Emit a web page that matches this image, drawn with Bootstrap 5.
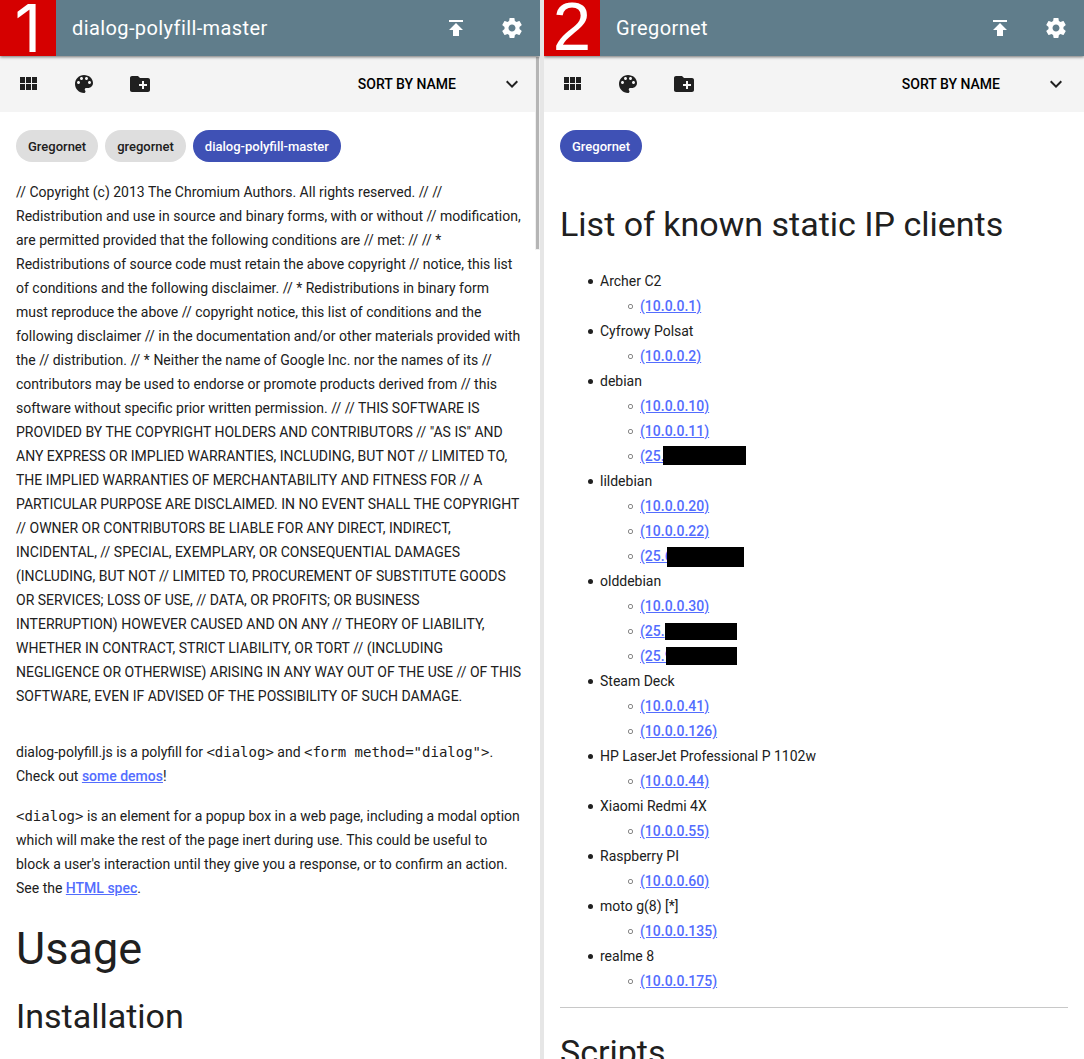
<!DOCTYPE html>
<html lang="en">
<head>
<meta charset="utf-8">
<title>Gregornet</title>
<link rel="stylesheet" href="https://cdn.jsdelivr.net/npm/bootstrap@5.3.0/dist/css/bootstrap.min.css">
<style>
body{font-family:Roboto,sans-serif;font-size:14px;line-height:24px;color:#202020;background:#e6e6e6;height:1059px;overflow:hidden}
.pane{width:540px;height:1059px;background:#fff;overflow:hidden}
.bar-top{height:56px;background:#607d8b;color:#fff;box-shadow:0 1px 3px rgba(0,0,0,.55);z-index:2}
.num{width:56px;height:56px;background:#d50000;font:400 69px/54px "Liberation Sans",sans-serif}
.num-one{font-family:Inter,sans-serif;font-size:66px;line-height:57px;font-weight:400}
.pane-title{font-size:20px;letter-spacing:.4px}
.bar-tools{height:56px;background:#f4f4f4}
.icon-set{gap:32px}
.sort{color:#000;font-weight:500;margin-right:44px}
svg{width:24px;height:24px;fill:currentColor;display:block}
.tags{padding:18px 16px 0;gap:7px}
.tag{height:32px;line-height:33px;border-radius:16px;padding:0 12px;background:#dedede;font-size:13px;font-weight:500}
.tag-on{background:#3f51b5;color:#fff}
.body-text{padding:18px 16px 0}
a{color:#536dfe;font-weight:500}
code{font-family:"DejaVu Sans Mono",monospace;font-size:14px;color:inherit}
h2{font-size:45px;line-height:48px;font-weight:400;margin:25px 0 23px}
h3{font-size:34px;line-height:40px;font-weight:400;margin:0}
.clients{line-height:25px;padding-left:40px;margin:25px 0 0;list-style:none}
.clients ul{padding-left:40px;list-style:none}
.clients li{position:relative}
.clients li::before{content:"";position:absolute;left:-12px;top:10px;width:5px;height:5px;border-radius:50%;background:#202020}
.clients ul li::before{background:none;border:1px solid #888;border-radius:2px}
.hide-box{background:#000;display:block}
.rule{height:1px;background:#c8c8c8;margin-top:13px}
.scroll-thumb{right:0;top:57px;width:5px;height:193px;background:#f0f0f0;z-index:1}
.scroll-thumb::before{content:"";display:block;width:3px;height:192px;margin-left:1px;background:#b5b5b5}
</style>
<script src="https://cdn.jsdelivr.net/npm/bootstrap@5.3.0/dist/js/bootstrap.bundle.min.js"></script>
</head>
<body>
<svg class="d-none">
<symbol id="i-grid" viewBox="0 0 24 24"><path d="M4 11h5V5H4v6zm0 7h5v-6H4v6zm6 0h5v-6h-5v6zm6 0h5v-6h-5v6zm-6-7h5V5h-5v6zm6-6v6h5V5h-5z"/></symbol>
<symbol id="i-palette" viewBox="0 0 24 24"><path d="M12 3c-4.97 0-9 4.03-9 9s4.03 9 9 9c.83 0 1.5-.67 1.5-1.5 0-.39-.15-.74-.39-1.01-.23-.26-.38-.61-.38-.99 0-.83.67-1.5 1.5-1.5H16c2.76 0 5-2.24 5-5 0-4.42-4.03-8-9-8zm-5.5 9c-.83 0-1.5-.67-1.5-1.5S5.67 9 6.5 9 8 9.67 8 10.5 7.33 12 6.5 12zm3-4C8.67 8 8 7.33 8 6.5S8.67 5 9.5 5s1.5.67 1.5 1.5S10.33 8 9.5 8zm5 0c-.83 0-1.5-.67-1.5-1.5S13.67 5 14.5 5s1.5.67 1.5 1.5S15.33 8 14.5 8zm3 4c-.83 0-1.5-.67-1.5-1.5S16.67 9 17.5 9s1.5.67 1.5 1.5-.67 1.5-1.5 1.5z"/></symbol>
<symbol id="i-folder" viewBox="0 0 24 24"><path d="M20 6h-8l-2-2H4c-1.11 0-1.99.89-1.99 2L2 18c0 1.11.89 2 2 2h16c1.11 0 2-.89 2-2V8c0-1.11-.89-2-2-2zm-1 8h-3v3h-2v-3h-3v-2h3V9h2v3h3v2z"/></symbol>
<symbol id="i-top" viewBox="0 0 24 24"><path d="M5 4v2h14V4H5zm0 10h4v6h6v-6h4l-7-7-7 7z"/></symbol>
<symbol id="i-gear" viewBox="0 0 24 24"><path d="M19.43 12.98c.04-.32.07-.64.07-.98s-.03-.66-.07-.98l2.11-1.65c.19-.15.24-.42.12-.64l-2-3.46c-.12-.22-.39-.3-.61-.22l-2.49 1c-.52-.4-1.08-.73-1.69-.98l-.38-2.65C14.46 2.18 14.25 2 14 2h-4c-.25 0-.46.18-.49.42l-.38 2.65c-.61.25-1.17.59-1.69.98l-2.49-1c-.23-.09-.49 0-.61.22l-2 3.46c-.13.22-.07.49.12.64l2.11 1.65c-.04.32-.07.65-.07.98s.03.66.07.98l-2.11 1.65c-.19.15-.24.42-.12.64l2 3.46c.12.22.39.3.61.22l2.49-1c.52.4 1.08.73 1.69.98l.38 2.65c.03.24.24.42.49.42h4c.25 0 .46-.18.49-.42l.38-2.65c.61-.25 1.17-.59 1.69-.98l2.49 1c.23.09.49 0 .61-.22l2-3.46c.12-.22.07-.49-.12-.64l-2.11-1.65zM12 15.5c-1.93 0-3.5-1.57-3.5-3.5s1.57-3.5 3.5-3.5 3.5 1.57 3.5 3.5-1.57 3.5-3.5 3.5z"/></symbol>
<symbol id="i-down" viewBox="0 0 24 24"><path d="M16.59 8.59L12 13.17 7.41 8.59 6 10l6 6 6-6z"/></symbol>
</svg>
<div class="d-flex gap-1">
<section class="pane position-relative">
<header class="bar-top d-flex align-items-center position-relative pe-3">
<div class="num num-one text-center">1</div><div class="pane-title ms-3 me-auto">dialog-polyfill-master</div>
<div class="d-flex icon-set"><svg><use href="#i-top"/></svg><svg><use href="#i-gear"/></svg></div>
</header>
<div class="bar-tools d-flex align-items-center px-3">
<div class="d-flex me-auto icon-set"><svg><use href="#i-grid"/></svg><svg><use href="#i-palette"/></svg><svg><use href="#i-folder"/></svg></div>
<span class="sort">SORT BY NAME</span><svg><use href="#i-down"/></svg>
</div>
<div class="tags d-flex"><span class="tag">Gregornet</span><span class="tag">gregornet</span><span class="tag tag-on">dialog-polyfill-master</span></div>
<div class="body-text text-nowrap">
<p class="mb-0">// Copyright (c) 2013 The Chromium Authors. All rights reserved. // //<br>
Redistribution and use in source and binary forms, with or without // modification,<br>
are permitted provided that the following conditions are // met: // // *<br>
Redistributions of source code must retain the above copyright // notice, this list<br>
of conditions and the following disclaimer. // * Redistributions in binary form<br>
must reproduce the above // copyright notice, this list of conditions and the<br>
following disclaimer // in the documentation and/or other materials provided with<br>
the // distribution. // * Neither the name of Google Inc. nor the names of its //<br>
contributors may be used to endorse or promote products derived from // this<br>
software without specific prior written permission. // // THIS SOFTWARE IS<br>
PROVIDED BY THE COPYRIGHT HOLDERS AND CONTRIBUTORS // "AS IS" AND<br>
ANY EXPRESS OR IMPLIED WARRANTIES, INCLUDING, BUT NOT // LIMITED TO,<br>
THE IMPLIED WARRANTIES OF MERCHANTABILITY AND FITNESS FOR // A<br>
PARTICULAR PURPOSE ARE DISCLAIMED. IN NO EVENT SHALL THE COPYRIGHT<br>
// OWNER OR CONTRIBUTORS BE LIABLE FOR ANY DIRECT, INDIRECT,<br>
INCIDENTAL, // SPECIAL, EXEMPLARY, OR CONSEQUENTIAL DAMAGES<br>
(INCLUDING, BUT NOT // LIMITED TO, PROCUREMENT OF SUBSTITUTE GOODS<br>
OR SERVICES; LOSS OF USE, // DATA, OR PROFITS; OR BUSINESS<br>
INTERRUPTION) HOWEVER CAUSED AND ON ANY // THEORY OF LIABILITY,<br>
WHETHER IN CONTRACT, STRICT LIABILITY, OR TORT // (INCLUDING<br>
NEGLIGENCE OR OTHERWISE) ARISING IN ANY WAY OUT OF THE USE // OF THIS<br>
SOFTWARE, EVEN IF ADVISED OF THE POSSIBILITY OF SUCH DAMAGE.</p>
<p class="mb-3" style="margin-top:32px">dialog-polyfill.js is a polyfill for <code>&lt;dialog&gt;</code> and <code>&lt;form method="dialog"&gt;</code>.<br>
Check out <a href="#">some demos</a>!</p>
<p class="mb-0"><code>&lt;dialog&gt;</code> is an element for a popup box in a web page, including a modal option<br>
which will make the rest of the page inert during use. This could be useful to<br>
block a user's interaction until they give you a response, or to confirm an action.<br>
See the <a href="#">HTML spec</a>.</p>
<h2>Usage</h2>
<h3>Installation</h3>
</div>
<div class="scroll-thumb position-absolute"></div>
</section>
<section class="pane position-relative">
<header class="bar-top d-flex align-items-center position-relative pe-3">
<div class="num text-center">2</div><div class="pane-title ms-3 me-auto">Gregornet</div>
<div class="d-flex icon-set"><svg><use href="#i-top"/></svg><svg><use href="#i-gear"/></svg></div>
</header>
<div class="bar-tools d-flex align-items-center px-3">
<div class="d-flex me-auto icon-set"><svg><use href="#i-grid"/></svg><svg><use href="#i-palette"/></svg><svg><use href="#i-folder"/></svg></div>
<span class="sort">SORT BY NAME</span><svg><use href="#i-down"/></svg>
</div>
<div class="tags d-flex"><span class="tag tag-on">Gregornet</span></div>
<div class="px-3" style="padding-top:42px">
<h3>List of known static IP clients</h3>
<ul class="clients">
<li>Archer C2<ul><li><a href="#">(10.0.0.1)</a></li></ul></li>
<li>Cyfrowy Polsat<ul><li><a href="#">(10.0.0.2)</a></li></ul></li>
<li>debian<ul><li><a href="#">(10.0.0.10)</a></li><li><a href="#">(10.0.0.11)</a></li><li><a href="#">(25.</a><span class="hide-box position-absolute" style="left:23px;top:2px;width:83px;height:19px"></span></li></ul></li>
<li>lildebian<ul><li><a href="#">(10.0.0.20)</a></li><li><a href="#">(10.0.0.22)</a></li><li><a href="#">(25.6</a><span class="hide-box position-absolute" style="left:27px;top:3px;width:77px;height:20px"></span></li></ul></li>
<li>olddebian<ul><li><a href="#">(10.0.0.30)</a></li><li><a href="#">(25.</a><span class="hide-box position-absolute" style="left:25px;top:4px;width:72px;height:17px"></span></li><li><a href="#">(25.9</a><span class="hide-box position-absolute" style="left:26px;top:3px;width:71px;height:18px"></span></li></ul></li>
<li>Steam Deck<ul><li><a href="#">(10.0.0.41)</a></li><li><a href="#">(10.0.0.126)</a></li></ul></li>
<li>HP LaserJet Professional P 1102w<ul><li><a href="#">(10.0.0.44)</a></li></ul></li>
<li>Xiaomi Redmi 4X<ul><li><a href="#">(10.0.0.55)</a></li></ul></li>
<li>Raspberry PI<ul><li><a href="#">(10.0.0.60)</a></li></ul></li>
<li>moto g(8) [*]<ul><li><a href="#">(10.0.0.135)</a></li></ul></li>
<li>realme 8<ul><li><a href="#">(10.0.0.175)</a></li></ul></li>
</ul>
<div class="rule"></div>
<h3 style="margin-top:24px">Scripts</h3>
</div>
</section>
</div>
</body>
</html>
